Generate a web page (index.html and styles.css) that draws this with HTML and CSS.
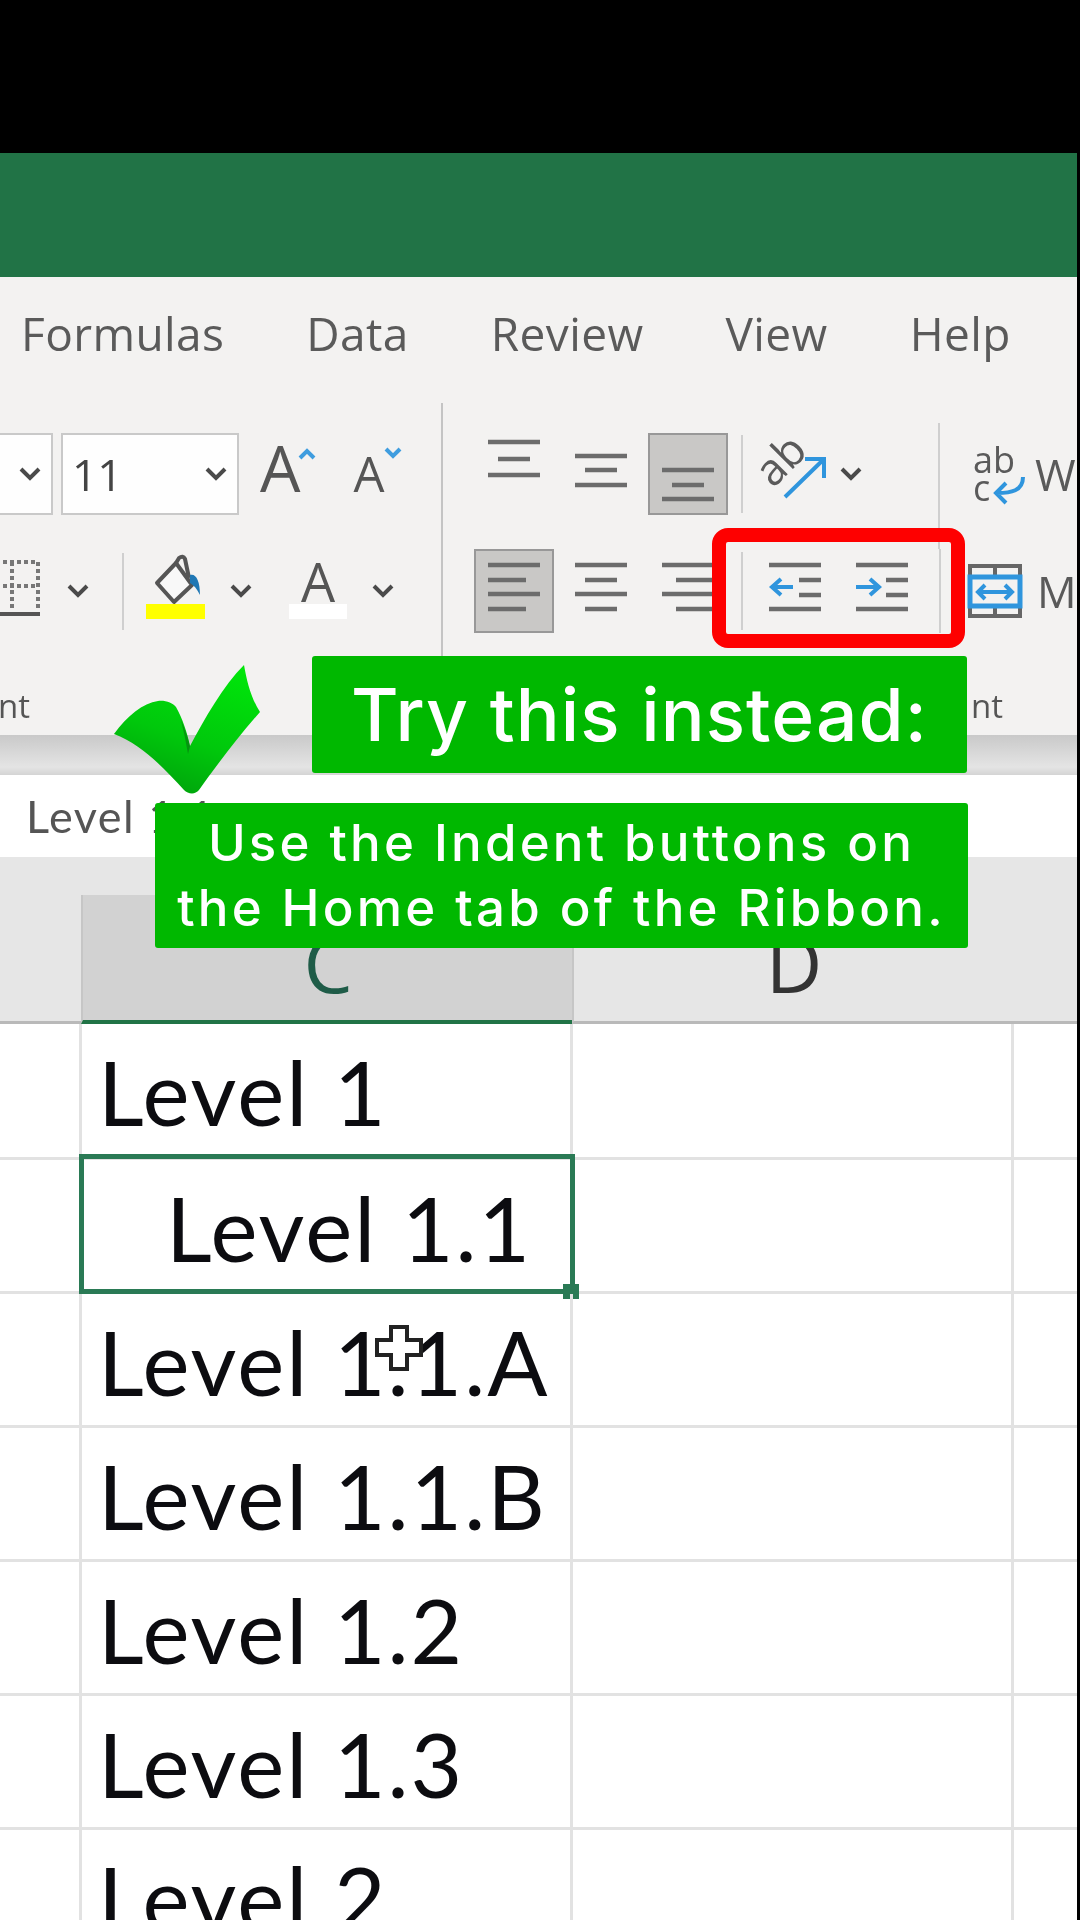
FILE: index.html
```html
<!DOCTYPE html>
<html lang="en">
<head>
<meta charset="utf-8">
<title>Excel indent tip</title>
<link rel="stylesheet" href="styles.css">
</head>
<body>
<div class="screen">
  <div class="app">
    <div class="titlebar"></div>
    <div class="ribbon">
      <nav class="tabs">
        <span>Formulas</span><span>Data</span><span>Review</span><span>View</span><span>Help</span>
      </nav>
      <div class="groups">
        <section class="group font-group">
          <div class="row row-one">
            <div class="combo name-box"><svg class="chev" viewBox="0 0 22 14"><path d="M2 2l9 9 9-9"/></svg></div>
            <div class="combo size-box"><span>11</span><svg class="chev" viewBox="0 0 22 14"><path d="M2 2l9 9 9-9"/></svg></div>
            <span class="grow-a">A</span>
            <svg class="caret" viewBox="0 0 18 12"><path d="M2 10l7-7 7 7"/></svg>
            <span class="shrink-a">A</span>
            <svg class="caret caret-down" viewBox="0 0 18 12"><path d="M2 2l7 7 7-7"/></svg>
          </div>
          <div class="row row-two">
            <svg class="borders" viewBox="0 0 40 84"><path class="dots" d="M-4 13H38V62M12 13V62M-4 37H38"/><path class="solid" d="M-4 65H40"/></svg>
            <svg class="chev c-a" viewBox="0 0 22 14"><path d="M2 2l9 9 9-9"/></svg>
            <i class="sep"></i>
            <svg class="bucket" viewBox="0 0 59 84"><path class="pail" d="M11 34L30 14L46 36L28 53Z"/><path class="pail-handle" d="M30 14L33 9q4-3 6 1L43 29"/><path class="drop" d="M44 26c6-2 10 6 10 20-3-6-6-10-10-12z"/><rect class="fill-y" y="55" width="59" height="15"/></svg>
            <svg class="chev c-b" viewBox="0 0 22 14"><path d="M2 2l9 9 9-9"/></svg>
            <div class="font-color"><span>A</span><i></i></div>
            <svg class="chev c-c" viewBox="0 0 22 14"><path d="M2 2l9 9 9-9"/></svg>
          </div>
          <div class="group-label label-font">nt</div>
        </section>
        <section class="group align-group">
          <div class="row row-one">
            <div class="cell"><svg class="lines" viewBox="0 0 52 84"><path d="M0 10H52M10 27H42M0 43H52"/></svg></div>
            <div class="cell"><svg class="lines" viewBox="0 0 52 84"><path d="M0 24H52M10 38H42M0 53H52"/></svg></div>
            <div class="cell"><div class="pressed"><svg class="lines" viewBox="0 0 52 84"><path d="M0 38H52M10 53H42M0 67H52"/></svg></div></div>
            <i class="sep sep-a"></i>
            <svg class="orient" viewBox="0 0 64 70"><text class="orient-text" transform="translate(8 50) rotate(-45)">ab</text><path class="blue" d="M20 58L58 21M40 20H59V39"/></svg>
            <svg class="chev c-d" viewBox="0 0 22 14"><path d="M2 2l9 9 9-9"/></svg>
            <i class="divider"></i>
            <div class="wrap-cmd">
              <svg class="wrap" viewBox="0 0 54 70"><text class="wrap-text" x="0" y="34">ab</text><text class="wrap-text" x="0" y="62">c</text><path class="blue" d="M50 38c0 14-12 16-26 16M33 44L23 54l10 10"/></svg>
              <span>W</span>
            </div>
          </div>
          <div class="row row-two">
            <div class="cell"><div class="pressed"><svg class="lines" viewBox="0 0 52 84"><path d="M0 16H52M0 31H38M0 45H52M0 60H38"/></svg></div></div>
            <div class="cell"><svg class="lines" viewBox="0 0 52 84"><path d="M0 16H52M10 31H42M0 45H52M10 60H42"/></svg></div>
            <div class="cell"><svg class="lines" viewBox="0 0 52 84"><path d="M0 16H52M14 31H52M0 45H52M14 60H52"/></svg></div>
            <i class="sep sep-a"></i>
            <div class="cell cell-first"><svg class="lines" viewBox="0 0 52 84"><path d="M0 16H52M30 31H52M30 46H52M0 60H52"/><path class="blue" d="M24 38H4M12 30L3 38l9 8"/></svg></div>
            <div class="cell"><svg class="lines" viewBox="0 0 52 84"><path d="M0 16H52M30 31H52M30 46H52M0 60H52"/><path class="blue" d="M0 38H22M14 30l9 8-9 8"/></svg></div>
            <i class="divider divider-b"></i>
            <div class="merge-cmd">
              <svg class="merge" viewBox="0 0 54 54"><path class="merge-frame" d="M2 2H52V52H2zM27 2V12M27 42V52"/><path class="merge-band" d="M2 13H52V42H2z"/><path class="merge-arrow" d="M10 28H44M17 21l-7 7 7 7M37 21l7 7-7 7"/></svg>
              <span>Me</span>
            </div>
          </div>
          <div class="group-label label-align">nt</div>
        </section>
      </div>
    </div>
    <div class="ribbon-shadow"></div>
    <div class="formula-bar">Level 1.1</div>
    <div class="sheet">
      <div class="hd hd-corner"></div><div class="hd hd-col hd-on"><span>C</span></div><div class="hd hd-col"><span>D</span></div><div class="hd hd-end"></div>
      <div class="gc"></div><div class="gc text">Level 1</div><div class="gc"></div><div class="gc"></div>
      <div class="gc"></div><div class="gc text selected"><span>Level 1.1</span></div><div class="gc"></div><div class="gc"></div>
      <div class="gc"></div><div class="gc text cursor-cell">Level 1.1.A<svg class="cursor" viewBox="0 0 48 46"><path d="M16 2H32V15H46V30H32V44H16V30H2V15H16z"/></svg></div><div class="gc"></div><div class="gc"></div>
      <div class="gc"></div><div class="gc text">Level 1.1.B</div><div class="gc"></div><div class="gc"></div>
      <div class="gc"></div><div class="gc text">Level 1.2</div><div class="gc"></div><div class="gc"></div>
      <div class="gc"></div><div class="gc text">Level 1.3</div><div class="gc"></div><div class="gc"></div>
      <div class="gc"></div><div class="gc text">Level 2</div><div class="gc"></div><div class="gc"></div>
    </div>
  </div>
  <div class="red-frame"></div>
  <div class="callout callout-head">Try this instead:</div>
  <div class="callout callout-body">Use the Indent buttons on<br>the Home tab of the Ribbon.</div>
  <svg class="check" viewBox="0 0 150 135">
    <defs>
      <linearGradient id="checkFill" x1="0.8" y1="0" x2="0.4" y2="1">
        <stop offset="0" stop-color="#00e60a"/>
        <stop offset="0.6" stop-color="#00c80c"/>
        <stop offset="1" stop-color="#00a40c"/>
      </linearGradient>
    </defs>
    <path fill="url(#checkFill)" d="M1 72C14 54 30 41 45 39C52 38 60 41 63 45C70 58 74 70 77 84C92 56 110 24 131 3C134 20 138 36 147 50C125 75 103 104 86 128C82 133 75 132 71 128C50 105 28 82 1 72Z"/>
    <path fill="#0a6d12" opacity=".55" d="M68 58Q74 72 77 84L75 92Q72 74 68 58Z"/>
  </svg>
</div>
</body>
</html>
```
FILE: styles.css
```css
*, *::before, *::after { box-sizing: border-box; }
html, body { margin: 0; padding: 0; background: #000; }
body { width: 1080px; height: 1920px; overflow: hidden; }
svg { overflow: visible; }

.screen { position: relative; width: 1080px; height: 1920px; background: #000; overflow: hidden; padding-top: 153px; }
.app { width: 1077px; height: 1767px; overflow: hidden; display: flex; flex-direction: column; filter: blur(0.6px); }

.titlebar { height: 124px; flex: none; background: #217346; }

.ribbon { height: 458px; flex: none; background: #f3f2f1; display: flex; flex-direction: column; font-family: "Open Sans", sans-serif; color: #555; }
.tabs { height: 126px; flex: none; display: flex; gap: 82px; padding: 25px 0 0 21px; font-size: 46px; letter-spacing: 0.4px; line-height: 62px; color: #5a5a5a; }
.groups { flex: 1; display: flex; min-height: 0; }
.group { display: flex; flex-direction: column; padding-top: 30px; }
.font-group { width: 443px; flex: none; border-right: 2px solid #c4c4c4; }
.align-group { flex: 1; min-width: 0; padding-left: 27px; }
.row { display: flex; align-items: center; flex: none; }
.row-one { height: 82px; }
.row-two { height: 84px; margin-top: 34px; }
.group-label { font-size: 33px; line-height: 44px; color: #555; margin-top: 51px; }
.label-font { margin-left: -2px; }
.label-align { margin-left: 501px; }

.combo { height: 82px; background: #fefefe; border: 2px solid #c9c9c9; display: flex; align-items: center; justify-content: flex-end; padding-right: 10px; }
.name-box { width: 53px; border-left: 0; }
.size-box { width: 178px; margin-left: 8px; justify-content: space-between; padding-left: 9px; font-size: 44px; color: #444; }
.chev { width: 22px; height: 14px; flex: none; fill: none; stroke: #4a4a4a; stroke-width: 4; }

.grow-a { font-size: 64px; line-height: 82px; margin-left: 21px; color: #555; position: relative; top: -6px; }
.shrink-a { font-size: 49px; line-height: 82px; margin-left: 37px; color: #555; position: relative; top: -1px; }
.caret { width: 18px; height: 12px; flex: none; fill: none; stroke: #3f9ddf; stroke-width: 4; margin: -40px 0 0 -2px; }
.caret-down { margin-left: 0; margin-top: -42px; }

.borders { width: 40px; height: 84px; flex: none; fill: none; }
.dots { stroke: #777; stroke-width: 4; stroke-dasharray: 4 3; }
.solid { stroke: #555; stroke-width: 4; }
.c-a { margin-left: 27px; }
.sep { width: 2px; height: 77px; background: #cfcfcf; flex: none; margin-left: 33px; }
.bucket { width: 59px; height: 84px; flex: none; margin-left: 22px; }
.pail { fill: #f8f8f8; stroke: #555; stroke-width: 4; stroke-linejoin: round; }
.pail-handle { fill: none; stroke: #555; stroke-width: 4; }
.drop { fill: #1f77b4; }
.fill-y { fill: #ffff00; }
.c-b { margin-left: 25px; }
.font-color { width: 58px; margin-left: 37px; height: 84px; display: flex; flex-direction: column; align-items: center; }
.font-color span { font-size: 54px; line-height: 64px; height: 55px; color: #555; }
.font-color i { display: block; width: 58px; height: 15px; background: #fff; }
.c-c { margin-left: 25px; }

.cell { width: 87px; height: 84px; display: flex; align-items: center; justify-content: center; flex: none; }
.row-one .cell { height: 82px; }
.lines { width: 52px; height: 84px; flex: none; fill: none; stroke: #6c6c6c; stroke-width: 4.5; }
.blue { fill: none; stroke: #2f95dd; stroke-width: 4; }
.pressed { width: 80px; height: 100%; background: #c9c8c6; border: 2px solid #989898; display: flex; align-items: center; justify-content: center; }
.sep-a { height: 78px; margin-left: 10px; }
.cell-first { margin-left: 8px; }
.orient { width: 64px; height: 70px; flex: none; margin-left: 22px; }
.orient-text { font-size: 44px; fill: #5a5a5a; font-family: "Open Sans", sans-serif; }
.c-d { margin-left: 11px; }
.divider { width: 2px; background: #cfcfcf; height: 126px; flex: none; margin-left: 76px; align-self: flex-start; margin-top: -10px; }
.divider-b { height: 84px; margin-left: 14px; margin-top: 0; }
.wrap-cmd, .merge-cmd { display: flex; align-items: center; margin-left: 33px; font-size: 44px; color: #5a5a5a; flex: none; }
.wrap { width: 54px; height: 70px; flex: none; margin-right: 8px; }
.wrap-text { font-size: 36px; fill: #5a5a5a; font-family: "Open Sans", sans-serif; }
.merge-cmd { margin-left: 27px; }
.merge { width: 54px; height: 54px; flex: none; margin-right: 15px; fill: none; }
.merge-frame { stroke: #666; stroke-width: 4; }
.merge-band { stroke: #2f95dd; stroke-width: 5; fill: #f3f2f1; }
.merge-arrow { stroke: #2f95dd; stroke-width: 4; }

.ribbon-shadow { height: 40px; flex: none; background: linear-gradient(#c9c9c9, #e4e4e4 80%, #d4d4d4); }
.formula-bar { height: 82px; flex: none; background: #fff; padding-left: 26px; font-family: Lato, sans-serif; font-size: 45px; letter-spacing: 1.5px; line-height: 82px; color: #555; }

.sheet { flex: 1; display: grid; grid-template-columns: 82px 491px 441px 1fr; grid-template-rows: 167px 136px repeat(6, 134px); background: #fff; min-height: 0; }
.hd { background: #e6e6e6; border-bottom: 3px solid #b9b9b9; }
.hd-col { padding-top: 38px; font-family: "Open Sans", sans-serif; font-size: 78px; color: #333; background: #e6e6e6; text-align: center; border-bottom: 0; }
.hd-col span { display: block; height: 129px; line-height: 136px; overflow: hidden; margin-left: -1px; border-left: 2px solid #c6c6c6; border-bottom: 3px solid #b9b9b9; }
.hd-on { color: #1f5c48; }
.hd-on span { background: #d2d2d2; border-bottom: 4px solid #217346; }
.gc { border-right: 3px solid #e2e2e2; border-bottom: 3px solid #e2e2e2; }
.gc:nth-child(4n) { border-right: 0; }
.text { font-family: Lato, sans-serif; font-size: 89px; letter-spacing: 2px; line-height: 136px; color: #0c0c10; padding-left: 16px; position: relative; white-space: nowrap; }

.selected span { padding-left: 68px; }
.selected::before { content: ""; position: absolute; left: -3px; top: -6px; width: 496px; height: 140px; border: 5px solid #2a7a55; }
.selected::after { content: ""; position: absolute; left: 481px; top: 124px; width: 16px; height: 15px; background: #2a7a55; }
.cursor { position: absolute; left: 293px; top: 31px; width: 48px; height: 46px; fill: #fff; stroke: #222; stroke-width: 4; }

.red-frame { position: absolute; left: 712px; top: 528px; width: 253px; height: 120px; border: 14px solid #fe0000; border-radius: 16px; }
.callout { position: absolute; background: #00b800; color: #fff; border-radius: 3px; font-family: Inter, sans-serif; text-align: center; white-space: nowrap; }
.callout-head { left: 312px; top: 656px; width: 655px; height: 117px; font-size: 73px; letter-spacing: 1.1px; font-weight: 500; line-height: 117px; }
.callout-body { left: 155px; top: 803px; width: 813px; height: 145px; font-size: 51px; letter-spacing: 3.2px; font-weight: 500; line-height: 65px; padding-top: 7px; }
.check { position: absolute; left: 113px; top: 662px; width: 150px; height: 135px; }
```
